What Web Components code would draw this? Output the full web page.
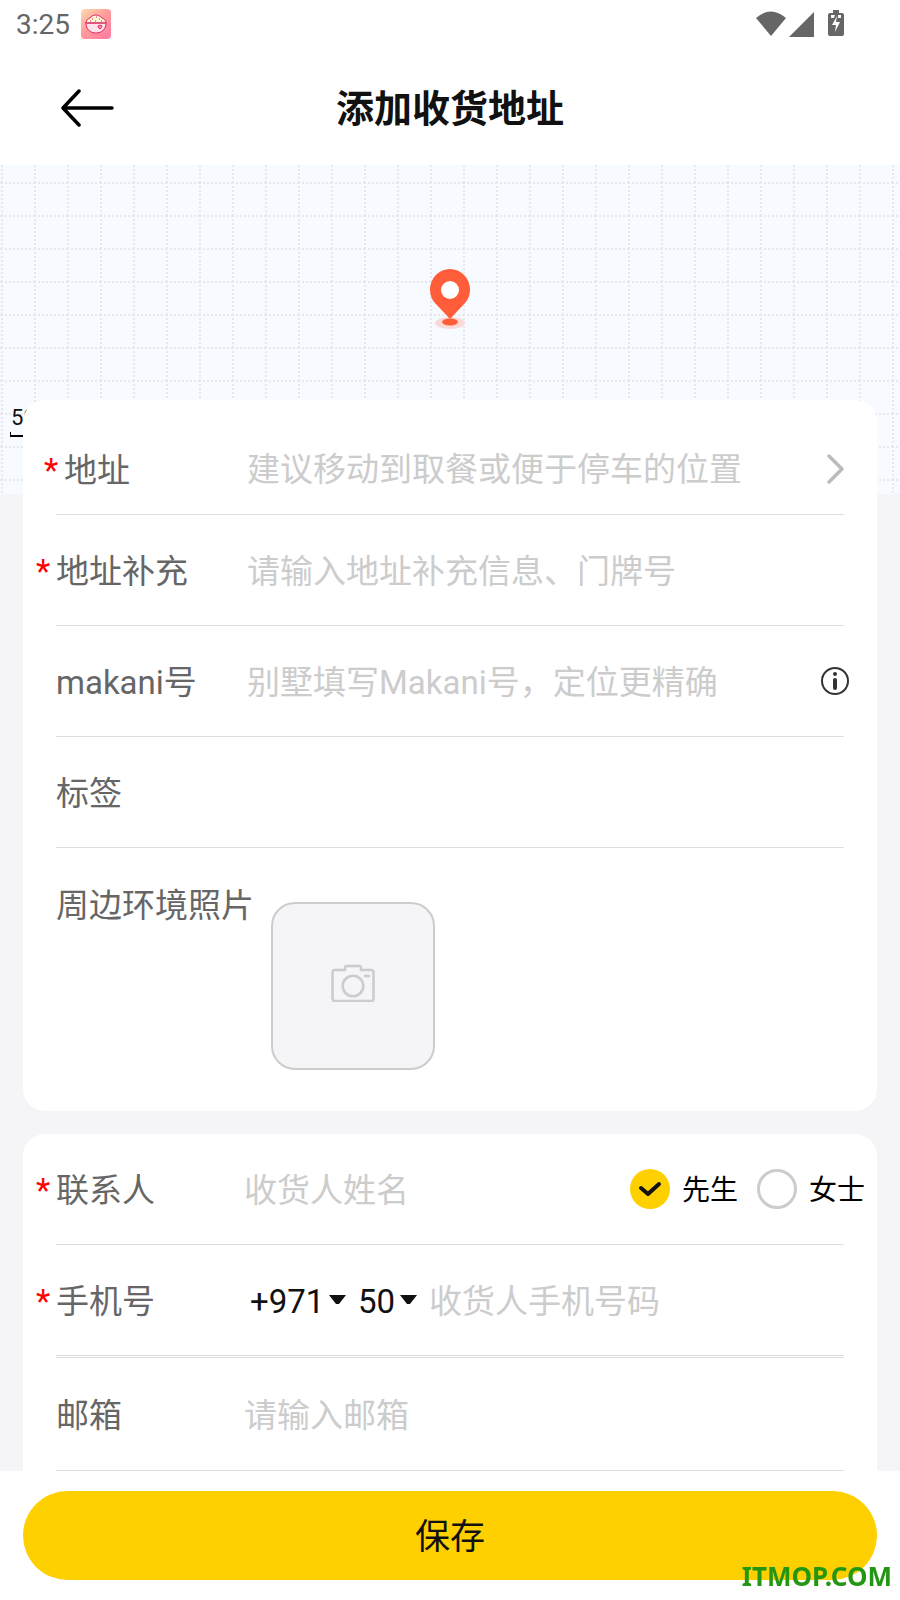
<!DOCTYPE html>
<html lang="zh-CN">
<head>
<meta charset="utf-8">
<meta name="viewport" content="width=device-width, initial-scale=1">
<title>添加收货地址</title>
<style>
    body {
        margin: 0;
        background-color: #fff;
        color: #111;
        font-family: Roboto, "Noto Sans CJK SC", sans-serif;
        font-size: 33px;
    }
</style>
</head>
<body>
<address-page></address-page>

<script>
const define = (name, html, setup) => {
    const template = document.createElement('template');
    template.innerHTML = html;

    window.customElements.define(name, class extends HTMLElement {
        constructor() {
            super();
            this.attachShadow({ mode: 'open' });
            this.shadowRoot.appendChild(template.content.cloneNode(true));
        }

        connectedCallback() {
            if (setup) setup(this, this.shadowRoot);
        }
    });
};

define('status-bar', `
    <style>
        :host {
            display: flex;
            align-items: center;
            height: 48px;
            padding: 0 56px 0 16px;
            color: #666;
            font-size: 28px;
        }

        .app {
            margin-left: 11px;
        }

        .system {
            display: flex;
            margin-left: auto;
        }

        svg {
            display: block;
        }
    </style>

    <span>3:25</span>
    <svg class="app" width="30" height="30" viewBox="0 0 30 30">
        <defs>
            <linearGradient id="bg" x1="0" y1="0" x2="0.8" y2="1">
                <stop offset="0" stop-color="#ffdcae"/>
                <stop offset="0.5" stop-color="#ff9c9c"/>
                <stop offset="1" stop-color="#ff7ea2"/>
            </linearGradient>
        </defs>
        <rect width="30" height="30" rx="4" fill="url(#bg)"/>
        <path d="M5 14c0-3 2-4 4-5 1-2 4-3 6-3s4 1 6 3c2 1 4 2 4 5z" fill="#fff6d6" stroke="#e0246a"/>
        <path d="M5 14h20c0 6-4 10-10 10S5 20 5 14z" fill="#ffe3ea" stroke="#e0246a"/>
        <path d="M4 14h22" stroke="#e0567e" stroke-width="2"/>
        <path d="M11 10h1M15 8h1M18 10h1M14 12h1M20 12h1M9 12h1" stroke="#e0246a"/>
        <path d="M17 17l2-1 2 1-1 2-1 1-2-2z" fill="#ff9fb8" stroke="#e0246a"/>
    </svg>
    <div class="system">
        <svg width="88" height="28" viewBox="0 0 88 28" fill="#666">
            <path d="M0 8Q15-5 30 8L15 26z"/>
            <path d="M58 2v25H33z"/>
            <path d="M77 0h6v3h3q2 0 2 2v19q0 2-2 2H74q-2 0-2-2V5q0-2 2-2h3z"/>
            <path d="M75 5h4l-1 3h-3zM82 5h3v3h-3zM81 6l-5 9h4l-1 7 5-10h-4z" fill="#fff"/>
        </svg>
    </div>
`);

define('page-header', `
    <style>
        :host {
            display: grid;
            grid-template-columns: 1fr auto 1fr;
            align-items: center;
            height: 117px;
            padding: 0 60px;
        }

        button {
            justify-self: start;
            padding: 0;
            border: none;
            background: none;
            cursor: pointer;
        }

        svg {
            display: block;
        }

        h1 {
            margin: 0;
            padding-bottom: 2px;
            font-size: 38px;
            font-weight: 700;
        }
    </style>

    <button type="button" aria-label="返回">
        <svg width="55" height="40" viewBox="0 0 55 40" fill="none" stroke="#000" stroke-width="3.500" stroke-linecap="round" stroke-linejoin="round">
            <path d="M19 4L3 21l16 17M3 21h49"/>
        </svg>
    </button>
    <h1><slot></slot></h1>
`);

define('map-view', `
    <style>
        :host {
            display: block;
            position: relative;
            height: 329px;
            background-color: #f7faff;
        }

        .grid {
            display: block;
            width: 100%;
            height: 100%;
        }

        .pin {
            position: absolute;
            top: 104px;
            left: 50%;
            margin-left: -21px;
        }

        .scale {
            position: absolute;
            top: 241px;
            left: 10px;
            width: 60px;
            height: 31px;
            border: solid #000;
            border-width: 0 2px 2px 0;
            box-sizing: border-box;
            padding-left: 1px;
            color: #111;
            font-size: 22px;
            line-height: 24px;
        }

        .scale::after {
            content: "";
            position: absolute;
            bottom: -2px;
            left: 0;
            width: 1px;
            height: 5px;
            background-color: #000;
        }
    </style>

    <svg class="grid" aria-hidden="true">
        <defs>
            <pattern id="cell" width="33" height="33" x="1" y="17" patternUnits="userSpaceOnUse">
                <path d="M0 1h33M1 0v33" stroke="#e6e8ee" stroke-width="2" stroke-dasharray="2 2"/>
            </pattern>
        </defs>
        <rect width="100%" height="100%" fill="url(#cell)"/>
    </svg>
    <svg class="pin" width="42" height="62" viewBox="0 0 42 62">
        <ellipse cx="21" cy="54" rx="15" ry="6" fill="#fbd9d6"/>
        <ellipse cx="21" cy="53" rx="8" ry="3.500" fill="#ff5c39"/>
        <path d="M21 50L6 34C3 31 1 26 1 20.500a20 20.500 0 0 1 40 0c0 5.500-2 10.500-5 13.500z" fill="#ff5c39"/>
        <circle cx="21" cy="21" r="9" fill="#fff"/>
    </svg>
    <div class="scale">50</div>
`);

define('form-card', `
    <style>
        :host {
            display: flex;
            flex-direction: column;
            position: relative;
            margin: 0 23px;
            padding: 0 33px;
            border-radius: 22px;
            background-color: #fff;
        }
    </style>

    <slot></slot>
`);

define('form-row', `
    <style>
        :host {
            display: flex;
            align-items: center;
            min-height: 110px;
            border-bottom: 1px solid #ddd;
        }

        :host([divider="double"]) {
            border-bottom: 3px double #ddd;
        }

        :host([picker]) {
            min-height: 91px;
            padding-top: 23px;
        }

        label {
            display: flex;
            flex: none;
            align-items: baseline;
            box-sizing: border-box;
            width: var(--label-width, 191px);
            padding-bottom: 2px;
            color: #666;
            white-space: nowrap;
        }

        :host([picker]) label {
            padding-left: 8px;
        }

        .star {
            width: 20px;
            margin-left: -20px;
            color: #f00;
        }

        input {
            flex: 1;
            min-width: 0;
            padding: 2px 0 0;
            border: none;
            outline: none;
            background: none;
            color: #111;
            font: inherit;
        }

        input::placeholder {
            color: #ccc;
            opacity: 1;
        }
    </style>

    <label for="field"><span class="star" hidden>*</span><span class="text"></span></label>
    <slot name="lead"></slot>
    <input id="field" type="text">
    <slot></slot>
`, (host, root) => {
    const input = root.querySelector('input');
    root.querySelector('.text').textContent = host.getAttribute('label');
    root.querySelector('.star').hidden = !host.hasAttribute('required');
    input.placeholder = host.getAttribute('placeholder') || '';
    input.type = host.getAttribute('type') || 'text';
    input.readOnly = host.hasAttribute('picker');
});

define('icon-button', `
    <style>
        :host {
            display: block;
        }

        button {
            display: block;
            padding: 0;
            border: none;
            background: none;
            cursor: pointer;
        }
    </style>

    <button type="button"><slot></slot></button>
`, (host, root) => {
    root.querySelector('button').setAttribute('aria-label', host.getAttribute('label'));
});

define('code-select', `
    <style>
        :host {
            display: flex;
            align-items: center;
            gap: 4px;
            margin-left: 6px;
            margin-right: 6px;
        }

        :host(:last-child) {
            margin-right: 12px;
        }

        select {
            appearance: none;
            padding: 2px 0 0;
            border: none;
            background: none;
            color: #111;
            font: inherit;
            cursor: pointer;
        }
    </style>

    <select></select>
    <svg width="17" height="10" viewBox="0 0 17 10" fill="#111"><path d="M0 0h17L10 9H7z"/></svg>
`, (host, root) => {
    const select = root.querySelector('select');
    select.setAttribute('aria-label', host.getAttribute('label'));
    select.replaceChildren(new Option(host.getAttribute('value')));
});

define('gender-choice', `
    <style>
        :host {
            display: flex;
            gap: 19px;
            margin-right: -21px;
            color: #000;
            font-size: 28px;
        }

        label {
            display: flex;
            align-items: center;
            gap: 12px;
            white-space: nowrap;
            cursor: pointer;
        }

        .text {
            padding-bottom: 2px;
        }

        .radio {
            display: grid;
        }

        input, svg {
            grid-area: 1 / 1;
            width: 40px;
            height: 40px;
            margin: 0;
        }

        input {
            appearance: none;
            box-sizing: border-box;
            border: 3px solid #ccc;
            border-radius: 50%;
        }

        input:checked {
            border: none;
            background-color: #ffd000;
        }

        svg {
            visibility: hidden;
            pointer-events: none;
        }

        input:checked + svg {
            visibility: visible;
        }
    </style>

    <label>
        <span class="radio">
            <input type="radio" name="gender" checked>
            <svg viewBox="0 0 40 40" fill="none" stroke="#111" stroke-width="4" stroke-linecap="round" stroke-linejoin="round"><path d="M11 19l7 6 11-10"/></svg>
        </span>
        <span class="text">先生</span>
    </label>
    <label>
        <span class="radio">
            <input type="radio" name="gender">
            <svg viewBox="0 0 40 40" fill="none" stroke="#111" stroke-width="4" stroke-linecap="round" stroke-linejoin="round"><path d="M11 19l7 6 11-10"/></svg>
        </span>
        <span class="text">女士</span>
    </label>
`);

define('photo-row', `
    <style>
        :host {
            display: flex;
            align-items: flex-start;
            gap: 17px;
            padding-bottom: 41px;
        }

        span {
            padding-top: 31px;
            color: #666;
            white-space: nowrap;
        }

        button {
            display: grid;
            place-items: center;
            width: 164px;
            height: 168px;
            margin-top: 54px;
            padding: 0 0 6px;
            border: 2px solid #ccc;
            border-radius: 24px;
            background-color: #f5f5f8;
            cursor: pointer;
        }
    </style>

    <span id="caption"><slot></slot></span>
    <button type="button" aria-labelledby="caption">
        <svg width="44" height="38" viewBox="0 0 44 38" fill="none" stroke="#ccc" stroke-width="2.600">
            <path d="M4 6h10V4q0-2 2-2h12q2 0 2 2v2h10q2.500 0 2.500 2.500v26q0 2.500-2.500 2.500H4q-2.500 0-2.500-2.500v-26Q1.500 6 4 6z"/>
            <circle cx="22" cy="22" r="10.300"/>
            <path d="M33 12h6"/>
        </svg>
    </button>
`);

define('save-bar', `
    <style>
        :host {
            display: block;
            padding: 20px 23px;
            background-color: #fff;
        }

        button {
            display: block;
            width: 100%;
            height: 89px;
            padding: 0 0 4px;
            border: none;
            border-radius: 45px;
            background-color: #ffd000;
            color: #111;
            font: inherit;
            font-size: 35px;
            cursor: pointer;
        }
    </style>

    <button type="submit"><slot></slot></button>
`);

define('site-mark', `
    <style>
        :host {
            position: fixed;
            right: 8px;
            bottom: 6px;
            color: #239614;
            font-family: "Noto Sans", "Open Sans", sans-serif;
            font-size: 26px;
            font-weight: 700;
            pointer-events: none;
        }
    </style>

    <slot></slot>
`);

define('address-page', `
    <style>
        :host {
            display: flex;
            flex-direction: column;
            min-height: 100vh;
        }

        main {
            display: flex;
            flex: 1;
            flex-direction: column;
            background-color: #f5f5f8;
        }

        .place {
            margin-top: -94px;
        }

        .contact {
            --label-width: 188px;
            flex: 1;
            margin-top: 23px;
            border-radius: 22px 22px 0 0;
        }

        .contact form-row:last-child {
            flex: 1;
        }

        .info {
            margin-right: -5px;
        }

        svg {
            display: block;
        }
    </style>

    <status-bar></status-bar>
    <page-header>添加收货地址</page-header>
    <main>
        <map-view></map-view>
        <form-card class="place">
            <form-row label="地址" placeholder="建议移动到取餐或便于停车的位置" required picker>
                <icon-button label="选择地址">
                    <svg width="17" height="30" viewBox="0 0 17 30" fill="none" stroke="#bbb" stroke-width="3.400" stroke-linecap="round" stroke-linejoin="round"><path d="M2 2l13 13L2 28"/></svg>
                </icon-button>
            </form-row>
            <form-row label="地址补充" placeholder="请输入地址补充信息、门牌号" required></form-row>
            <form-row label="makani号" placeholder="别墅填写Makani号，定位更精确">
                <icon-button class="info" label="Makani号说明">
                    <svg width="28" height="28" viewBox="0 0 28 28" fill="none" stroke="#333" stroke-width="2">
                        <circle cx="14" cy="14" r="13"/>
                        <path d="M14 13v8" stroke-width="4" stroke-linecap="round"/>
                        <circle cx="14" cy="7" r="2" fill="#333" stroke="none"/>
                    </svg>
                </icon-button>
            </form-row>
            <form-row label="标签"></form-row>
            <photo-row>周边环境照片</photo-row>
        </form-card>
        <form-card class="contact">
            <form-row label="联系人" placeholder="收货人姓名" required>
                <gender-choice></gender-choice>
            </form-row>
            <form-row label="手机号" type="tel" placeholder="收货人手机号码" divider="double" required>
                <code-select slot="lead" label="国家代码" value="+971"></code-select>
                <code-select slot="lead" label="号段" value="50"></code-select>
            </form-row>
            <form-row label="邮箱" type="email" placeholder="请输入邮箱"></form-row>
        </form-card>
    </main>
    <save-bar>保存</save-bar>
    <site-mark>ITMOP.COM</site-mark>
`);
</script>
</body>
</html>
